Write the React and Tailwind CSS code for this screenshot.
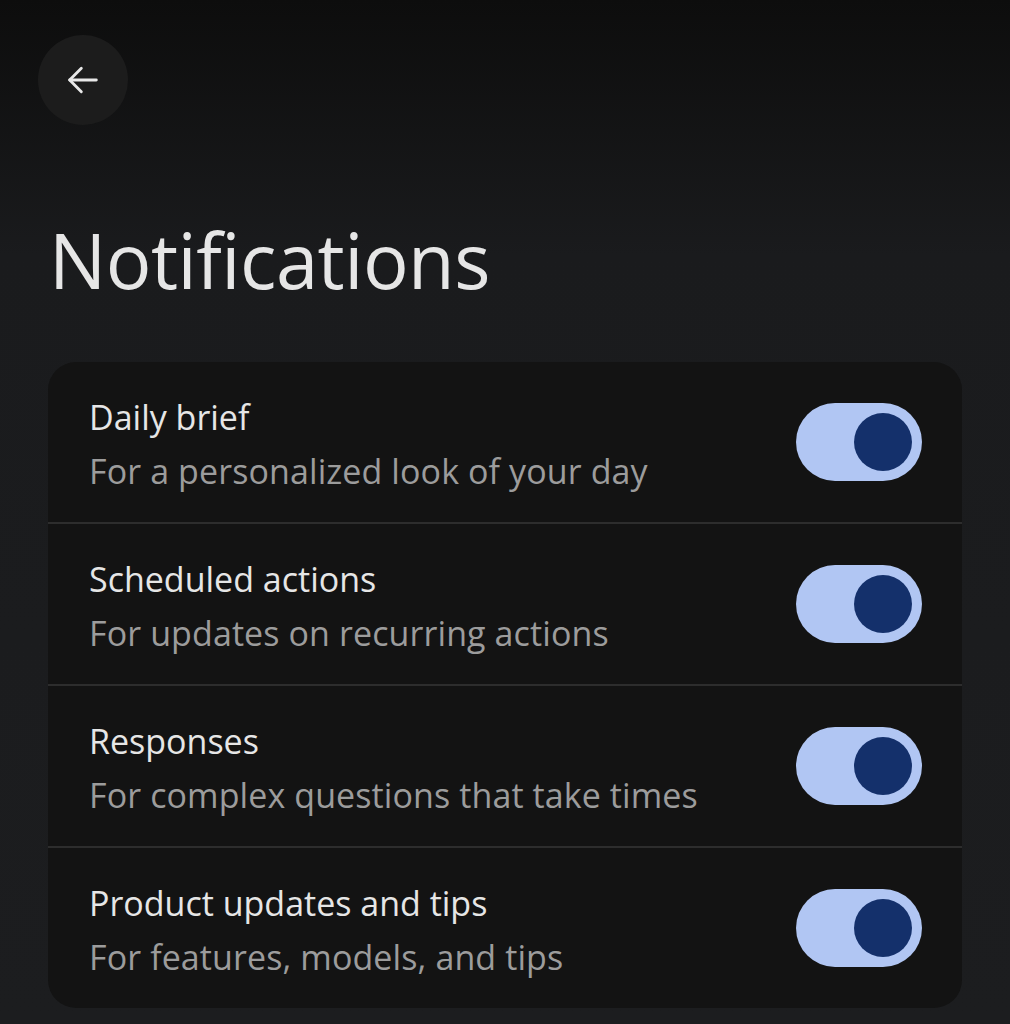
const items = [
  { title: 'Daily brief', desc: 'For a personalized look of your day' },
  { title: 'Scheduled actions', desc: 'For updates on recurring actions' },
  { title: 'Responses', desc: 'For complex questions that take times' },
  { title: 'Product updates and tips', desc: 'For features, models, and tips' },
]

function Toggle() {
  return (
    <div className="w-[126px] h-[78px] rounded-full bg-[#b1c6f3] flex items-center justify-end pr-[10px] shrink-0">
      <div className="w-[58px] h-[58px] rounded-full bg-[#14306b]" />
    </div>
  )
}

export default function App() {
  return (
    <div className="w-[1010px] h-[1024px] overflow-hidden bg-gradient-to-b from-[#0d0d0d] via-[#1a1b1d] via-[25%] to-[#1c1d1f] font-['Open_Sans',sans-serif]">
      <div className="pt-[35px] pl-[38px]">
        <button className="w-[90px] h-[90px] rounded-full bg-[#1c1c1c] flex items-center justify-center">
          <svg width="40" height="40" viewBox="0 0 24 24" fill="none" stroke="#e8e8e8" strokeWidth="1.7" strokeLinecap="round" strokeLinejoin="round">
            <path d="M20 12H4" />
            <path d="M11 5l-7 7 7 7" />
          </svg>
        </button>
      </div>
      <h1 className="mt-[97px] pl-[49px] text-[76px] leading-none font-normal text-[#e6e6e6] tracking-[-0.5px]">
        Notifications
      </h1>
      <div className="mt-[64px] mx-[48px] rounded-[28px] bg-[#131313] overflow-hidden">
        {items.map((it, i) => (
          <div
            key={i}
            className={`flex items-center justify-between pl-[41px] pr-[40px] ${i < 3 ? 'h-[162px] border-b-2 border-[#2d2d2d]' : 'h-[160px]'}`}
          >
            <div className="pt-[4px]">
              <div className="text-[34px] leading-[44px] text-[#e6e6e6]">{it.title}</div>
              <div className="mt-[10px] text-[34px] leading-[44px] text-[#9c9c9c] tracking-[0.1px]">{it.desc}</div>
            </div>
            <Toggle />
          </div>
        ))}
      </div>
    </div>
  )
}
